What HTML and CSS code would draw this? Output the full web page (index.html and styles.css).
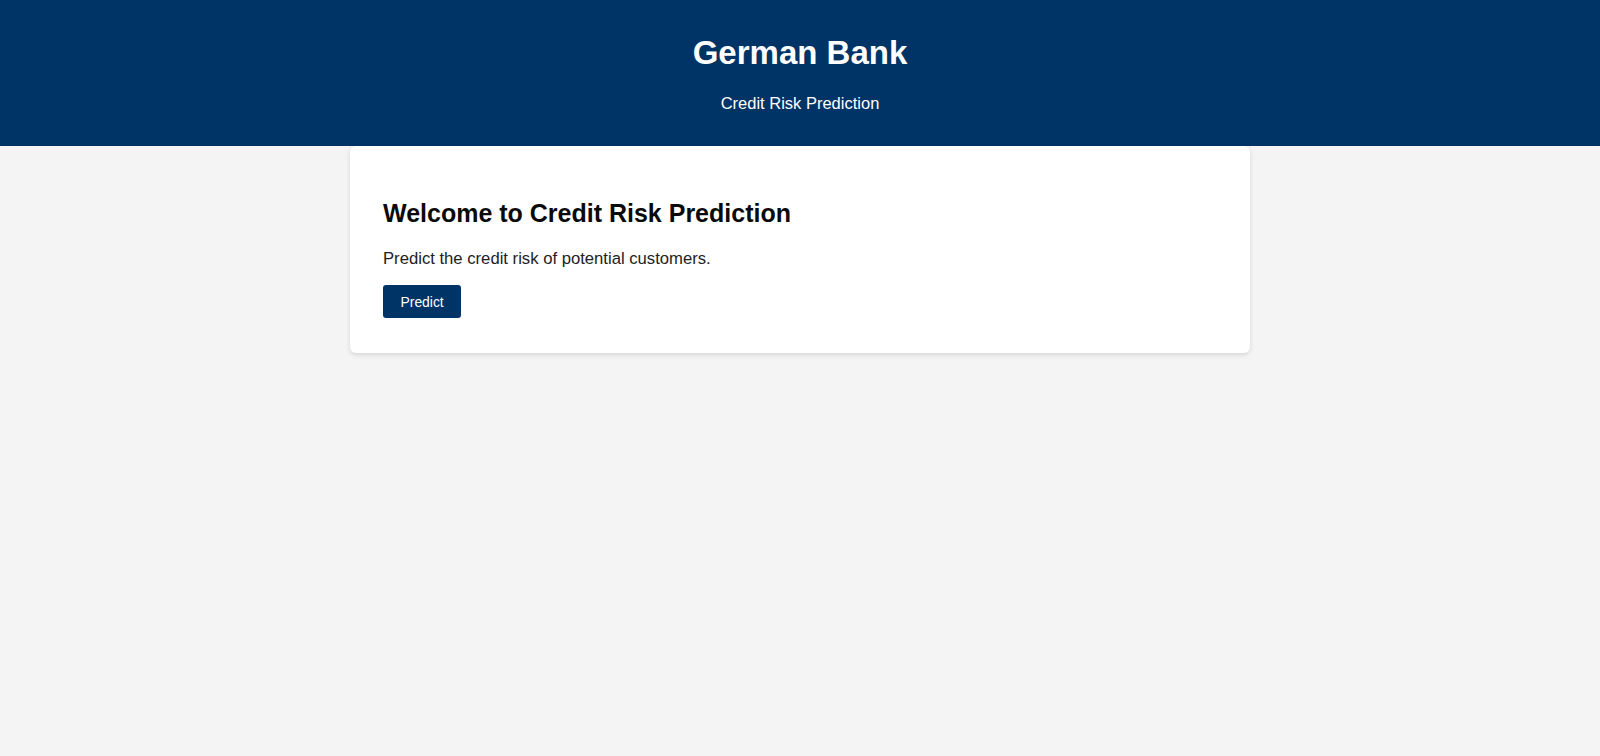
FILE: index.html
```html
<!DOCTYPE html>
<html lang="en">
<head>
<meta charset="utf-8">
<title>German Bank - Credit Risk Prediction</title>
<link rel="stylesheet" href="styles.css">
</head>
<body>
<header class="site-header">
  <h1 class="site-title">German Bank</h1>
  <p class="site-subtitle">Credit Risk Prediction</p>
</header>
<main class="container">
  <section class="card">
    <h2 class="card-title">Welcome to Credit Risk Prediction</h2>
    <p class="card-text">Predict the credit risk of potential customers.</p>
    <button class="btn" type="button">Predict</button>
  </section>
</main>
</body>
</html>
```

FILE: styles.css
```css
* { box-sizing: border-box; }

html, body {
  margin: 0;
  padding: 0;
}

body {
  background: #f4f4f4;
  font-family: "Liberation Sans", Arial, sans-serif;
  color: #333;
  min-height: 756px;
}

.site-header {
  background: #003366;
  color: #fff;
  text-align: center;
  height: 146px;
  padding-top: 34px;
}

.site-title {
  margin: 0 0 21.5px;
  font-size: 33px;
  font-weight: bold;
  line-height: normal;
}

.site-subtitle {
  margin: 0;
  font-size: 16.5px;
  line-height: normal;
}

.container {
  width: 900px;
  margin: 0 auto;
}

.card {
  background: #fff;
  border-radius: 6px;
  box-shadow: 0 2px 5px rgba(0, 0, 0, 0.12);
  padding: 33px 33px 35px;
}

.card-title {
  margin: 20px 0 21px;
  font-size: 25px;
  font-weight: bold;
  color: #0a0a0a;
  line-height: normal;
}

.card-text {
  margin: 0 0 16px;
  font-size: 16.67px;
  color: #222;
  line-height: normal;
}

.btn {
  display: block;
  background: #003366;
  color: #fff;
  border: none;
  border-radius: 3px;
  font-family: "Liberation Sans", Arial, sans-serif;
  font-size: 13.9px;
  line-height: 16px;
  padding: 8.5px 17.5px;
  cursor: pointer;
}
```
